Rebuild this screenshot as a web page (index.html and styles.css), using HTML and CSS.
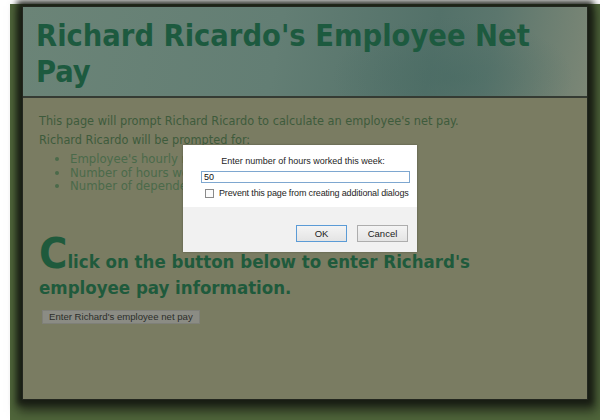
FILE: index.html
```html
<!DOCTYPE html>
<html>
<head>
<meta charset="utf-8">
<title>Richard Ricardo's Employee Net Pay</title>
<link rel="stylesheet" href="styles.css">
</head>
<body>
<div class="desk">
  <div class="page">
    <header class="masthead">
      <h1>Richard Ricardo's Employee Net Pay</h1>
    </header>
    <main class="content">
      <p class="intro">This page will prompt Richard Ricardo to calculate an employee's net pay.</p>
      <p class="intro">Richard Ricardo will be prompted for:</p>
      <ul class="inputs">
        <li>Employee's hourly rate</li>
        <li>Number of hours worked</li>
        <li>Number of dependents</li>
      </ul>
      <h2 class="cta"><span class="initial">C</span>lick on the button below to enter Richard's employee pay information.</h2>
      <button class="enter" type="button">Enter Richard's employee net pay</button>
    </main>
  </div>
</div>

<div class="dialog" role="dialog">
  <div class="dialog-body">
    <label class="prompt" for="hours">Enter number of hours worked this week:</label>
    <input id="hours" class="field" type="text" value="50">
    <label class="suppress"><span class="box"></span>Prevent this page from creating additional dialogs</label>
  </div>
  <div class="dialog-foot">
    <button class="dlg-btn ok" type="button">OK</button>
    <button class="dlg-btn" type="button">Cancel</button>
  </div>
</div>
</body>
</html>
```
FILE: styles.css
```css
html, body {
  margin: 0;
  padding: 0;
  background: #ffffff;
}

body {
  width: 600px;
  height: 420px;
  overflow: hidden;
  position: relative;
}

.desk {
  margin: 4px 0 0 10px;
  height: 416px;
  box-sizing: border-box;
  padding: 2px 12px 0 12px;
  background: #50663b;
}

.page {
  height: 394px;
  background: #7a7c62;
  border: 1px solid #23271f;
  box-shadow: 0 0 6px 5px rgba(20, 24, 16, 0.85), 2px 6px 10px 6px rgba(20, 24, 16, 0.6);
  box-sizing: border-box;
  display: flex;
  flex-direction: column;
}

.masthead {
  height: 91px;
  box-sizing: border-box;
  border-bottom: 2px solid #353b33;
  padding: 11px 12px 0 13px;
  background:
    radial-gradient(ellipse 120px 60px at 430px 70px, rgba(70, 105, 98, 0.55), rgba(70, 105, 98, 0)),
    linear-gradient(100deg, #6b8477 0%, #637e74 45%, #537169 72%, #5b766d 82%, #7c8776 100%);
}

.masthead h1 {
  margin: 0;
  font-family: "DejaVu Sans Condensed", "DejaVu Sans", Verdana, sans-serif;
  font-stretch: condensed;
  font-weight: bold;
  font-size: 30.5px;
  line-height: 36px;
  color: #1d5a3f;
}

.content {
  padding: 16px 16px 0 16px;
  font-family: "DejaVu Sans Condensed", "DejaVu Sans", Verdana, sans-serif;
  font-stretch: condensed;
  color: #3e5b3c;
}

.intro {
  margin: 0 0 5px 0;
  font-size: 12.6px;
  line-height: 14px;
}

.inputs {
  margin: 0;
  padding-left: 31px;
  font-size: 13px;
  line-height: 13.5px;
  color: #4b6a4a;
}

.cta {
  margin: 56px 0 0 0;
  max-width: 450px;
  font-size: 18.5px;
  line-height: 26px;
  color: #1f5a3c;
}

.initial {
  font-size: 43px;
  line-height: 0;
}

.enter {
  display: block;
  margin: 9px 0 0 3px;
  font-family: "Liberation Sans", Arial, sans-serif;
  font-size: 9.6px;
  color: #2c2e2a;
  background: #8b8c84;
  border: 1px solid #7f8079;
  padding: 0 6px;
  height: 14px;
  line-height: 12px;
}

/* prompt dialog */
.dialog {
  position: absolute;
  left: 183px;
  top: 145px;
  width: 234px;
  height: 107px;
  background: #ffffff;
  box-shadow: 0 0 2px rgba(0, 0, 0, 0.3);
  font-family: "Liberation Sans", Arial, sans-serif;
  font-size: 9px;
  color: #1e1e1e;
  display: flex;
  flex-direction: column;
}

.dialog-body {
  padding: 11px 7px 0 18px;
  display: flex;
  flex-direction: column;
  height: 62px;
  box-sizing: border-box;
}

.prompt {
  text-align: center;
  padding-right: 5px;
  line-height: 11px;
}

.field {
  margin-top: 4px;
  width: 209px;
  height: 12px;
  box-sizing: border-box;
  border: 1px solid #7ea7d0;
  padding: 0 2px;
  font-family: "Liberation Sans", Arial, sans-serif;
  font-size: 9px;
  color: #111;
  outline: none;
}

.suppress {
  margin-top: 5px;
  margin-left: 4px;
  display: flex;
  align-items: center;
  gap: 5px;
  line-height: 11px;
  letter-spacing: -0.15px;
  white-space: nowrap;
}

.box {
  flex: none;
  width: 7px;
  height: 7px;
  border: 1px solid #8a8a8a;
  background: #fbfbfb;
}

.dialog-foot {
  flex: 1;
  background: #f1f1f1;
  display: flex;
  justify-content: flex-end;
  align-items: flex-start;
  gap: 10px;
  padding: 18px 9px 0 0;
}

.dlg-btn {
  width: 51px;
  height: 17px;
  font-family: "Liberation Sans", Arial, sans-serif;
  font-size: 9.5px;
  color: #222;
  background: linear-gradient(#f4f4f4, #e4e4e4);
  border: 1px solid #adadad;
  padding: 0;
}

.dlg-btn.ok {
  border-color: #5b9bd6;
}
```
